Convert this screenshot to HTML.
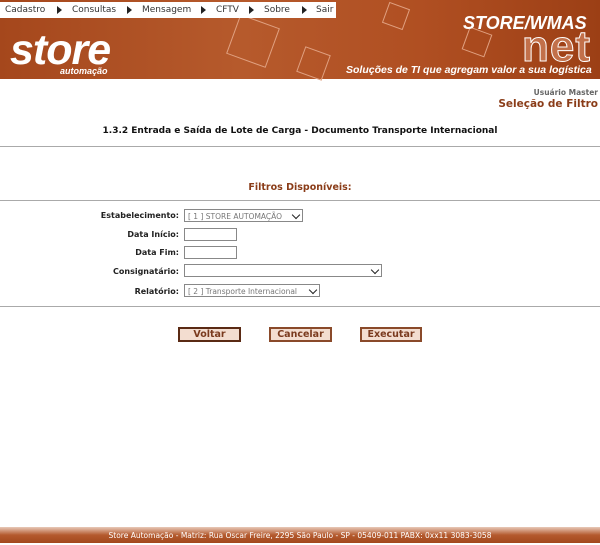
<!DOCTYPE html>
<html><head><meta charset="utf-8"><style>
body{margin:0;width:600px;height:543px;position:relative;background:#fff;font-family:"DejaVu Sans","Liberation Sans",sans-serif;overflow:hidden}
.hdr{position:absolute;left:0;top:0;width:600px;height:79px;background:linear-gradient(90deg,#a5471c 0%,#b65a2c 40%,#b04f22 70%,#9c3f15 100%)}
.menu{position:absolute;left:0;top:2px;width:336px;height:16px;background:#fff;font-size:9px;color:#333;line-height:16px}
.menu span{position:absolute;top:0}
.tri{width:0;height:0;border-left:5px solid #222;border-top:4px solid transparent;border-bottom:4px solid transparent;top:4px!important}
.logo{position:absolute;left:10px;top:26px;font:italic bold 43px "Liberation Sans",sans-serif;color:#fff;letter-spacing:-1px;line-height:48px}
.auto{position:absolute;left:60px;top:66px;font:bold italic 9px "Liberation Sans",sans-serif;color:#fff}
.wm{position:absolute;left:463px;top:13px;font:italic bold 18px "Liberation Sans",sans-serif;color:#fff}
.net{position:absolute;left:522px;top:22px;font:bold 44px "Liberation Sans",sans-serif;color:#c2704a;-webkit-text-stroke:1px #fff;letter-spacing:1px}
.slog{position:absolute;left:346px;top:64px;font:bold italic 10.5px "Liberation Sans",sans-serif;color:#fff}
.box{position:absolute;border:1px solid #e0a080;transform:rotate(20deg)}
.t{position:absolute;white-space:nowrap}
hr{position:absolute;left:0;width:600px;margin:0;border:0;border-top:1px solid #aaa}
.lbl{position:absolute;font-size:8px;font-weight:bold;color:#222;text-align:right;width:100px;left:79px}
.inp{position:absolute;border:1px solid #888;height:13px;background:#fff;font-size:7.5px;color:#777;line-height:13px;padding-left:3px;box-sizing:border-box}
.chev{position:absolute;right:3px;top:2px;width:5px;height:5px;border-right:1.5px solid #222;border-bottom:1.5px solid #222;transform:rotate(45deg)}
.btn{position:absolute;top:327px;height:15px;background:#f3ddd0;border:2px solid #8a4a2a;font-size:9.5px;font-weight:bold;color:#7a3a1e;text-align:center;line-height:12px;box-sizing:border-box}
.ft{position:absolute;left:0;top:527px;width:600px;height:16px;background:linear-gradient(#e8c9b8,#b45a2e 50%,#a3471c);color:#fff;font-size:7.5px;text-align:center;line-height:18px}
</style></head><body>
<div class="hdr">
<div class="box" style="left:232px;top:20px;width:40px;height:40px"></div>
<div class="box" style="left:300px;top:50px;width:25px;height:25px"></div>
<div class="box" style="left:385px;top:5px;width:20px;height:20px"></div>
<div class="box" style="left:465px;top:30px;width:22px;height:22px"></div>
<div class="menu">
<span style="left:5px">Cadastro</span><span class="tri" style="left:57px"></span>
<span style="left:72px">Consultas</span><span class="tri" style="left:127px"></span>
<span style="left:142px">Mensagem</span><span class="tri" style="left:201px"></span>
<span style="left:216px">CFTV</span><span class="tri" style="left:249px"></span>
<span style="left:264px">Sobre</span><span class="tri" style="left:302px"></span>
<span style="left:316px">Sair</span></div>
<div class="logo">store</div><div class="auto">automação</div>
<div class="wm">STORE/WMAS</div><div class="net">net</div>
<div class="slog">Soluções de TI que agregam valor a sua logística</div>
</div>
<div class="t" style="right:2px;top:88px;font-size:7.5px;font-weight:bold;color:#666">Usuário Master</div>
<div class="t" style="right:2px;top:98px;font-size:10.5px;font-weight:bold;color:#8a3c18">Seleção de Filtro</div>
<div class="t" style="left:0;width:600px;text-align:center;top:126px;font-size:9px;font-weight:bold;color:#111">1.3.2 Entrada e Saída de Lote de Carga - Documento Transporte Internacional</div>
<hr style="top:146px">
<div class="t" style="left:0;width:600px;text-align:center;top:182px;font-size:9.5px;font-weight:bold;color:#8a3c18">Filtros Disponíveis:</div>
<hr style="top:200px">
<div class="lbl" style="top:211px">Estabelecimento:</div>
<div class="inp" style="left:184px;top:209px;width:119px">[ 1 ] STORE AUTOMAÇÃO<div class="chev"></div></div>
<div class="lbl" style="top:230px">Data Início:</div>
<div class="inp" style="left:184px;top:228px;width:53px"></div>
<div class="lbl" style="top:248px">Data Fim:</div>
<div class="inp" style="left:184px;top:246px;width:53px"></div>
<div class="lbl" style="top:267px">Consignatário:</div>
<div class="inp" style="left:184px;top:264px;width:198px"><div class="chev"></div></div>
<div class="lbl" style="top:287px">Relatório:</div>
<div class="inp" style="left:184px;top:284px;width:136px">[ 2 ] Transporte Internacional<div class="chev"></div></div>
<hr style="top:306px">
<div class="btn" style="left:178px;width:63px;border-color:#5a2a14">Voltar</div>
<div class="btn" style="left:269px;width:63px">Cancelar</div>
<div class="btn" style="left:360px;width:62px">Executar</div>
<div class="ft">Store Automação - Matriz: Rua Oscar Freire, 2295 São Paulo - SP - 05409-011 PABX: 0xx11 3083-3058</div>
</body></html>
